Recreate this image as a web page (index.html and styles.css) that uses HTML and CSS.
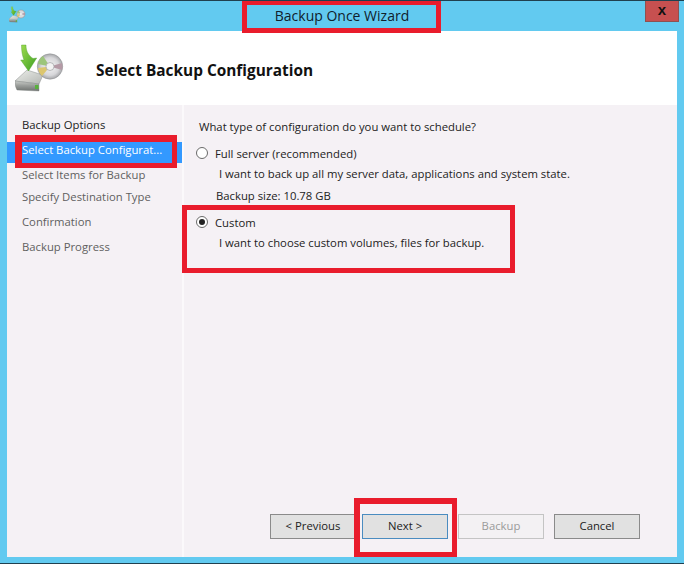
FILE: index.html
```html
<!DOCTYPE html>
<html lang="en">
<head>
<meta charset="utf-8">
<title>Backup Once Wizard</title>
<link rel="stylesheet" href="styles.css">
</head>
<body>
<svg class="defs" width="0" height="0" aria-hidden="true">
  <defs>
    <linearGradient id="top" x1="0" y1="0" x2="1" y2="1"><stop offset="0" stop-color="#eceeea"/><stop offset="1" stop-color="#b4b7b3"/></linearGradient>
    <linearGradient id="frt" x1="0" y1="0" x2="0" y2="1"><stop offset="0" stop-color="#c9ccc8"/><stop offset=".45" stop-color="#9b9e9b"/><stop offset="1" stop-color="#6f7370"/></linearGradient>
    <linearGradient id="arw" x1="0" y1="0" x2="1" y2="1"><stop offset="0" stop-color="#9fdc50"/><stop offset="1" stop-color="#3c9f22"/></linearGradient>
    <radialGradient id="dsc"><stop offset="0" stop-color="#f6f6f6"/><stop offset=".7" stop-color="#d6d6d9"/><stop offset="1" stop-color="#a5a6a9"/></radialGradient>
    <symbol id="backup" viewBox="0 0 50 50">
      <path d="M0 38 L12 27 L28 32 L24 41 Z" fill="url(#top)" stroke="#8b8e8c" stroke-width=".5"/>
      <path d="M0 38 L24 41 L24 48 L2 47 Q0 44 0 38 Z" fill="url(#frt)" stroke="#7c807d" stroke-width=".4"/>
      <path d="M20 42 L23.5 42 L23.5 46 L20 46 Z" fill="#58b23c"/>
      <circle cx="35" cy="23.5" r="12.7" fill="url(#dsc)" stroke="#8f9093" stroke-width=".5"/>
      <path d="M35 23.5 L23 21 A12.4 12.4 0 0 1 28 13 Z" fill="#9cc57a"/>
      <path d="M35 23.5 L23 25 A12.4 12.4 0 0 0 27 33 Z" fill="#dcc66e"/>
      <path d="M35 23.5 L47 20 A12.4 12.4 0 0 1 47 27 Z" fill="#b59aa6"/>
      <circle cx="35" cy="23.5" r="4" fill="#f3f3f3" stroke="#9fa0a3" stroke-width=".7"/>
      <path d="M6.5 2 L11 2 C11 8 13 12 18 15.5 L21.7 15 L13.5 28 L5.7 17 L9 17 C7 12 6.5 7 6.5 2 Z" fill="url(#arw)" stroke="#4a9c2c" stroke-width=".4"/>
    </symbol>
  </defs>
</svg>
<div class="window">
  <header class="titlebar">
    <svg class="app-icon" aria-hidden="true"><use href="#backup"/></svg>
    <span class="title">Backup Once Wizard</span>
    <button class="close" type="button">x</button>
  </header>
  <div class="client">
    <div class="banner">
      <svg class="banner-icon" aria-hidden="true"><use href="#backup"/></svg>
      <h1 class="heading">Select Backup Configuration</h1>
    </div>
    <div class="content">
      <nav class="steps">
        <div class="step done">Backup Options</div>
        <div class="step current">Select Backup Configurat...</div>
        <div class="step">Select Items for Backup</div>
        <div class="step step-tight">Specify Destination Type</div>
        <div class="step">Confirmation</div>
        <div class="step">Backup Progress</div>
      </nav>
      <main class="main">
        <div class="form">
          <p class="question">What type of configuration do you want to schedule?</p>
          <div class="option">
            <span class="radio"></span>
            <span class="label">Full server (recommended)</span>
          </div>
          <p class="desc">I want to back up all my server data, applications and system state.</p>
          <p class="size">Backup size: 10.78 GB</p>
          <div class="option option-custom">
            <span class="radio checked"></span>
            <span class="label">Custom</span>
          </div>
          <p class="desc">I want to choose custom volumes, files for backup.</p>
        </div>
        <div class="actions">
          <button class="btn btn-prev" type="button">&lt; Previous</button>
          <button class="btn default" type="button">Next &gt;</button>
          <button class="btn disabled" type="button">Backup</button>
          <button class="btn" type="button">Cancel</button>
        </div>
      </main>
    </div>
  </div>
  <div class="mark mark-title"></div>
  <div class="mark mark-step"></div>
  <div class="mark mark-custom"></div>
  <div class="mark mark-next"></div>
</div>
</body>
</html>
```
FILE: styles.css
```css
* { box-sizing: border-box; }
html, body { margin: 0; padding: 0; }
body { font-family: "Open Sans", "Noto Sans", sans-serif; font-size: 11.3px; color: #1e1e1e; }
.defs { position: absolute; }
.window {
  position: relative;
  width: 684px;
  height: 564px;
  background: #62caf0;
  border-top: 1px solid #20404f;
  border-bottom: 1px solid #20404f;
  display: flex;
  flex-direction: column;
  overflow: hidden;
}
.titlebar { height: 30px; flex: none; display: flex; align-items: center; justify-content: center; position: relative; }
.app-icon { position: absolute; left: 9px; top: 5px; width: 17px; height: 17px; }
.title { font-size: 14px; color: #10212c; margin-top: -1px; }
.close {
  position: absolute;
  right: 5px;
  top: 0;
  width: 34px;
  height: 21px;
  padding: 0 0 3px;
  background: #c75050;
  border: 1px solid #8f5050;
  border-top: 0;
  color: #111;
  font: bold 15px "Liberation Sans", sans-serif;
}
.client { flex: 1; margin: 0 7px 6px; background: #f5f1f5; display: flex; flex-direction: column; min-height: 0; }
.banner { height: 74px; flex: none; background: #fff; display: flex; align-items: center; }
.banner-icon { width: 50px; height: 50px; margin: 0 0 0 8px; flex: none; }
.heading { margin: 5px 0 0 31px; font-size: 15.4px; font-weight: 700; color: #111; }
.content { flex: 1; display: flex; min-height: 0; }
.steps { width: 175px; flex: none; padding-top: 8px; color: #5f5f5f; }
.step { height: 25px; padding-left: 15px; line-height: 24px; white-space: nowrap; }
.step-tight { height: 23px; line-height: 20px; }
.step.done { color: #222; }
.step.current { height: 21px; line-height: 16px; margin: 4px 0 0; background: #3399ff; color: #fff; }
.step.current + .step { height: 24px; line-height: 24px; }
.main { flex: 1; margin-left: 2px; display: flex; flex-direction: column; background: #f5f1f5; box-shadow: -2px 0 0 #fbf9fb; }
.form { flex: 1; padding: 13px 0 0 12px; }
.question { margin: 0 0 0 3px; line-height: 18px; color: #222; }
.option { display: flex; align-items: center; height: 18px; margin-top: 8px; color: #222; }
.option-custom { margin-top: 8px; }
.radio { width: 12px; height: 12px; border: 1px solid #6a6a6a; border-radius: 50%; background: #fff; flex: none; position: relative; }
.radio.checked::after { content: ""; position: absolute; inset: 2px; border-radius: 50%; background: #222; }
.label { margin-left: 7px; }
.desc { margin: 3px 0 0 23px; line-height: 18px; color: #222; }
.size { margin: 4px 0 0 20px; line-height: 18px; color: #222; }
.actions { flex: none; height: 50px; padding: 7px 37px 0 0; display: flex; justify-content: flex-end; gap: 10px; align-items: flex-start; }
.btn {
  width: 86px;
  height: 25px;
  padding: 0 0 2px;
  background: #e1e1e1;
  border: 1px solid #8a8a8a;
  color: #222;
  font: 11.3px "Open Sans", "Noto Sans", sans-serif;
}
.btn-prev { margin-right: -4px; }
.btn.default { border-color: #4a8cc0; }
.btn.disabled { background: #f3f1f3; border-color: #c4c4c4; color: #9a9a9a; }
.mark { position: absolute; border: 5px solid #e91c2c; pointer-events: none; }
.mark-title { left: 242px; top: 0; width: 199px; height: 32px; border-top-width: 4px; }
.mark-step { left: 15px; top: 134px; width: 162px; height: 33px; border-width: 7px 5px 5px 7px; }
.mark-custom { left: 182px; top: 204px; width: 333px; height: 68px; }
.mark-next { left: 354px; top: 497px; width: 103px; height: 59px; border-width: 6px 5px 5px 6px; }
```
